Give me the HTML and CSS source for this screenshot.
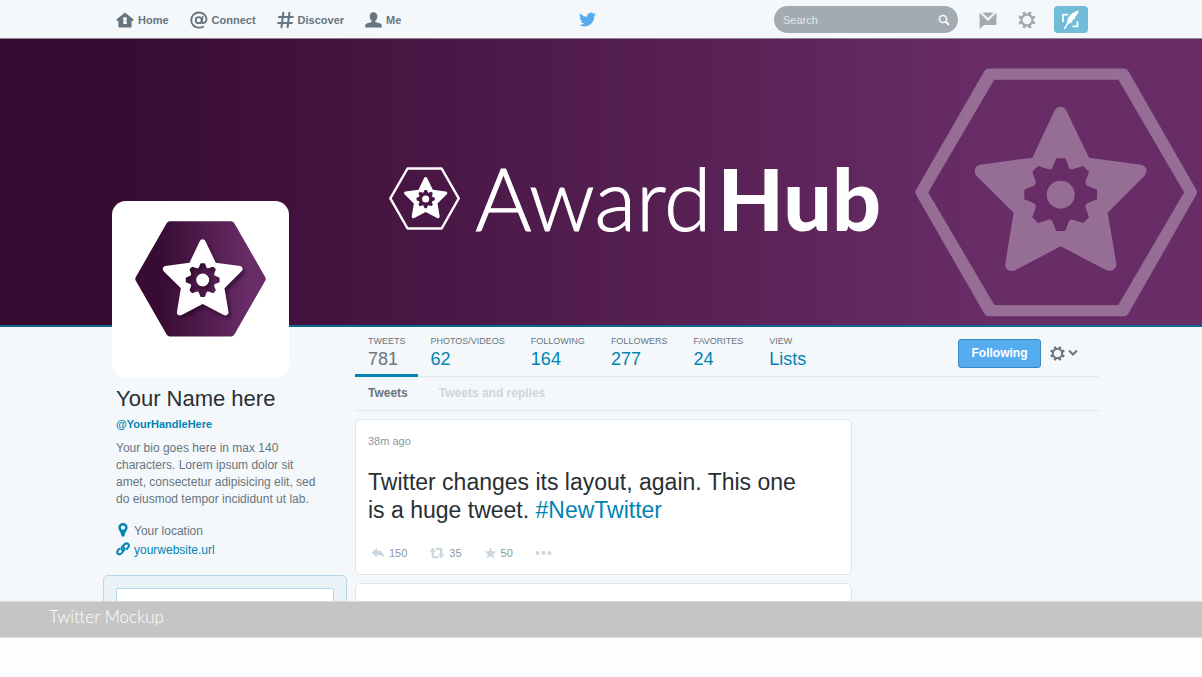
FILE: index.html
```html
<!DOCTYPE html>
<html lang="en">
<head>
  <meta charset="UTF-8">
  <meta name="viewport" content="width=device-width, initial-scale=1.0">
  <title>Twitter Mockup</title>
  <link rel="stylesheet" href="styles.css">
</head>
<body>

  <!-- shared shapes -->
  <svg class="defs" width="0" height="0" aria-hidden="true">
    <defs>
      <linearGradient id="hexFill" gradientUnits="userSpaceOnUse" x1="46" y1="425" x2="892" y2="425">
        <stop offset="0.18" stop-color="#370b32"/>
        <stop offset="0.85" stop-color="#682c66"/>
      </linearGradient>
      <path id="star" fill-rule="evenodd" d="M398 321L464 182Q469 168 482 168Q496 168 501 182L568 321L724 342Q741 346 741 360Q741 368 734 376L624 486L650 638Q651 652 640 658Q630 663 619 658L483 587L348 658Q336 664 325 658Q315 652 317 638L342 486L231 376Q225 369 225 360Q227 345 241 342Z
        M470 323L497 323L508 351Q511 358 519 356L551 346L568 363L558 392Q556 401 563 405L592 417L592 446L563 458Q556 462 558 471L568 500L551 517L519 507Q511 505 508 512L497 541L470 541L458 512Q455 505 447 507L415 517L398 500L408 471Q410 462 403 458L374 446L374 417L403 405Q410 401 408 392L398 363L415 346L447 356Q455 358 458 351Z
        M441 432a42 42 0 1 0 84 0a42 42 0 1 0 -84 0Z"/>
      <g id="gear" fill="none" stroke="currentColor">
        <circle cx="10" cy="10" r="5.5" stroke-width="2.3"/>
        <path stroke-width="2.8" d="M12.1 4.9L13.3 2M15.1 7.9L18 6.7M15.1 12.1L18 13.3M12.1 15.1L13.3 18M7.9 15.1L6.7 18M4.9 12.1L2 13.3M4.9 7.9L2 6.7M7.9 4.9L6.7 2"/>
      </g>
    </defs>
  </svg>

  <div class="screen">
    <header class="topbar">
      <div class="container topbar-inner">
        <nav class="nav">
          <a href="#">
            <svg width="18" height="18" viewBox="0 0 18 18"><path fill="currentColor" fill-rule="evenodd" d="M9 1.4L17.6 8.6L16.8 10H15.6V15.6Q15.6 16.6 14.6 16.6H3.4Q2.4 16.6 2.4 15.6V10H1.2L.4 8.6ZM9 6.1a1.9 1.9 0 0 0-1.2 3.4Q7.200 10 7.200 11V13H10.800V11Q10.800 10 10.200 9.500A1.900 1.900 0 0 0 9 6.100Z"/></svg>
            Home
          </a>
          <a href="#">
            <svg width="18" height="18" viewBox="0 0 18 18"><g fill="none" stroke="currentColor" stroke-width="1.8" stroke-linecap="round"><circle cx="8.7" cy="9.2" r="3"/><path d="M12.6 5.8L11.8 10.6Q11.7 12.4 13.3 12.2Q16.6 11.4 16.5 7.9A7.4 7.2 0 0 0 9 1.5A7.6 7.6 0 0 0 1.2 9.2A7.4 7.4 0 0 0 8.8 16.6Q11.2 16.7 13.2 15.7"/></g></svg>
            Connect
          </a>
          <a href="#">
            <svg width="17" height="18" viewBox="0 0 17 18"><path fill="none" stroke="currentColor" stroke-width="2.1" stroke-linecap="round" d="M6.3 1.8L4.5 16.2M12.4 1.8L10.6 16.2M2 6H15.8M1.2 12H15"/></svg>
            Discover
          </a>
          <a href="#">
            <svg width="17" height="18" viewBox="0 0 17 18"><path fill="currentColor" d="M8.5 1.2C11 1.2 12.4 2.9 12.3 5.3C12.2 7.7 11.3 9.2 10.2 10.1V11L14.8 12.2Q16.8 12.9 16.8 15V16.6H.2V15Q.2 12.9 2.2 12.2L6.8 11V10.1C5.7 9.2 4.8 7.7 4.7 5.3C4.6 2.9 6 1.2 8.5 1.2Z"/></svg>
            Me
          </a>
        </nav>

        <a class="bird" href="#" aria-label="Twitter">
          <svg width="17" height="17" viewBox="0 0 24 24"><path fill="currentColor" d="M23.953 4.57a10 10 0 01-2.825.775 4.958 4.958 0 002.163-2.723c-.951.555-2.005.959-3.127 1.184a4.92 4.92 0 00-8.384 4.482C7.69 8.095 4.067 6.13 1.64 3.162a4.822 4.822 0 00-.666 2.475c0 1.71.87 3.213 2.188 4.096a4.904 4.904 0 01-2.228-.616v.06a4.923 4.923 0 003.946 4.827 4.996 4.996 0 01-2.212.085 4.936 4.936 0 004.604 3.417 9.867 9.867 0 01-6.102 2.105c-.39 0-.779-.023-1.17-.067a13.995 13.995 0 007.557 2.209c9.053 0 13.998-7.496 13.998-13.985 0-.21 0-.42-.015-.63A9.935 9.935 0 0024 4.59z"/></svg>
        </a>

        <div class="tools">
          <form class="search">
            <input type="search" placeholder="Search" aria-label="Search">
            <button type="button" aria-label="Search">
              <svg width="12" height="12" viewBox="0 0 12 12"><g fill="none" stroke="currentColor" stroke-width="1.5"><circle cx="5" cy="5" r="3.6"/><path stroke-width="2" stroke-linecap="round" d="M7.9 7.9L10.4 10.4"/></g></svg>
            </button>
          </form>
          <button type="button" class="icon-btn" aria-label="Messages">
            <svg width="18" height="18" viewBox="0 0 18 18"><path fill="currentColor" d="M3.2 1.4H14.8L9 7ZM.6 1.4L9 10L17.4 1.4V14H5L.6 18Z"/><path fill="none" stroke="#f5f8fb" stroke-width="1.7" d="M1.400 1.200L9 8.600L16.600 1.200"/></svg>
          </button>
          <button type="button" class="icon-btn" aria-label="Settings">
            <svg width="20" height="20" viewBox="0 0 20 20"><use href="#gear"/></svg>
          </button>
          <button type="button" class="compose" aria-label="Compose new Tweet">
            <svg width="20" height="20" viewBox="0 0 20 20"><path fill="none" stroke="#fff" stroke-width="1.700" d="M7.200 4.600H2V12.300M11.500 16.400H16.500V11.300"/><path fill="#fff" d="M17.800 .3Q10.800 2.200 7.600 7.200Q5.900 10 6 12.800L2.600 18.800L4.100 19.300L7.200 14Q10.600 13.400 12.200 10.600L11 10.400Q13.600 9.400 14.800 7L13.600 6.900Q17 5 17.800 .3Z"/></svg>
          </button>
        </div>
      </div>
    </header>

    <section class="banner">
      <div class="brand">
        <svg width="71" height="63" viewBox="46 53 846 745" fill="#fff">
          <path fill="none" stroke="#fff" stroke-width="29" stroke-linejoin="round" d="M267 68H673L877 425L673 783H267L62 425Z"/>
          <use href="#star"/>
        </svg>
        <h1 class="wordmark"><span class="thin">Award</span><span class="heavy">Hub</span></h1>
      </div>
      <svg class="watermark" width="282" height="249" viewBox="46 53 846 745" aria-hidden="true">
        <path fill="none" stroke="#966d95" stroke-width="33" stroke-linejoin="round" d="M268 70H672L875 425L672 780H268L64 425Z"/>
        <path fill="none" stroke="#966d95" stroke-width="29" stroke-linejoin="round" d="M276 72H664L870 425L664 778H276L69 425Z"/>
        <use href="#star" fill="#966d95"/>
      </svg>
    </section>

    <div class="container profile">
      <aside class="sidebar">
        <div class="avatar">
          <svg width="131" height="116" viewBox="46 53 846 745">
            <path fill="url(#hexFill)" stroke="url(#hexFill)" stroke-width="50" stroke-linejoin="round" d="M272 78H666L865 425L666 772H272L73 425Z"/>
            <use class="avatar-star" href="#star" fill="#fff"/>
          </svg>
        </div>
        <div class="about">
          <h2>Your Name here</h2>
          <a class="handle" href="#">@YourHandleHere</a>
          <p class="bio">Your bio goes here in max 140 characters. Lorem ipsum dolor sit amet, consectetur adipisicing elit, sed do eiusmod tempor incididunt ut lab.</p>
          <p class="meta">
            <svg width="14" height="18" viewBox="0 0 14 18"><path fill="#0084b4" fill-rule="evenodd" d="M7 0A4.600 4.600 0 0 1 11.600 4.600C11.600 7.200 8.700 9.500 8.400 13.400H5.600C5.300 9.500 2.400 7.200 2.400 4.600A4.600 4.600 0 0 1 7 0ZM7 2.400A2.200 2.200 0 1 0 7 6.800A2.200 2.200 0 0 0 7 2.400Z"/></svg>
            Your location
          </p>
          <p class="meta">
            <svg width="14" height="18" viewBox="0 0 14 18"><g fill="none" stroke="#0084b4" stroke-width="2" stroke-linecap="round"><path d="M6.200 8.200Q4.800 6.600 6.200 5L8.600 2.200Q10.400 .6 12.200 2Q13.600 3.600 12.200 5.400L10.800 7"/><path d="M7.600 5.400Q9.200 7 7.800 8.600L5.400 11.400Q3.600 13.200 1.900 11.700Q.4 10.200 1.900 8.400L3.300 6.700"/></g></svg>
            <a href="#">yourwebsite.url</a>
          </p>
        </div>
        <div class="tweet-box">
          <input type="text" aria-label="Tweet to Your Name here">
        </div>
      </aside>

      <main class="main">
        <div class="stats-row">
          <ul class="stats">
            <li class="active"><a href="#"><span>Tweets</span>781</a></li>
            <li><a href="#"><span>Photos/Videos</span>62</a></li>
            <li><a href="#"><span>Following</span>164</a></li>
            <li><a href="#"><span>Followers</span>277</a></li>
            <li><a href="#"><span>Favorites</span>24</a></li>
            <li><a href="#"><span>View</span>Lists</a></li>
          </ul>
          <div class="follow">
            <button type="button" class="btn-follow">Following</button>
            <button type="button" class="btn-more" aria-label="More options">
              <svg width="17" height="17" viewBox="0 0 20 20"><use href="#gear"/></svg>
              <svg width="10" height="8" viewBox="0 0 10 8"><path fill="none" stroke="currentColor" stroke-width="2" d="M1 1.500L5 5.500L9 1.500"/></svg>
            </button>
          </div>
        </div>

        <nav class="tabs">
          <a class="current" href="#">Tweets</a>
          <a href="#">Tweets and replies</a>
        </nav>

        <article class="tweet">
          <time>38m ago</time>
          <p>Twitter changes its layout, again. This one is a huge tweet. <a href="#">#NewTwitter</a></p>
          <div class="actions">
            <button type="button" aria-label="Reply, 150">
              <svg width="14" height="12" viewBox="0 0 14 12"><path fill="currentColor" d="M6 .8V3.600Q12.800 3.600 13 11Q11.200 7.800 6 7.800V10.600L.6 5.700Z"/></svg>
              <span>150</span>
            </button>
            <button type="button" aria-label="Retweet, 35">
              <svg width="16" height="12" viewBox="0 0 16 12"><path fill="currentColor" d="M3.700 .8L7 4.600H4.900V9H8.500L10.500 11.200H4Q2.600 11.200 2.600 9.800V4.600H.4ZM5.700 .8H12Q13.400 .8 13.400 2.200V7.400H15.600L12.300 11.200L9 7.400H11.100V3H7.700Z"/></svg>
              <span>35</span>
            </button>
            <button type="button" aria-label="Favorite, 50">
              <svg width="13" height="12" viewBox="0 0 13 12"><path fill="currentColor" d="M6.500 .2L8.100 4.300L12.600 4.500L9.100 7.200L10.400 11.600L6.500 9.100L2.600 11.600L3.900 7.200L.4 4.500L4.900 4.300Z"/></svg>
              <span>50</span>
            </button>
            <button type="button" aria-label="More">
              <svg width="17" height="12" viewBox="0 0 17 12"><g fill="currentColor"><circle cx="2.500" cy="6" r="2"/><circle cx="8.500" cy="6" r="2"/><circle cx="14.500" cy="6" r="2"/></g></svg>
            </button>
          </div>
        </article>

        <article class="tweet">
          <time></time>
        </article>
      </main>
    </div>
  </div>

  <footer class="caption">Twitter Mockup</footer>

</body>
</html>
```

FILE: styles.css
```css
* { box-sizing: border-box; }

body {
  margin: 0;
  height: 100vh;
  display: flex;
  flex-direction: column;
  font-family: "Liberation Sans", Arial, sans-serif;
  font-size: 12px;
  color: #66757f;
  background: #fcfdff;
}
h1, h2, p, ul { margin: 0; padding: 0; }
a { color: #0084b4; text-decoration: none; }
svg { display: block; flex: none; }
button {
  font-family: inherit;
  padding: 0;
  border: none;
  background: none;
  cursor: pointer;
}
.defs { position: absolute; }

.screen {
  flex: 1;
  min-height: 0;
  overflow: hidden;
  background: #f5f8fa;
}
.container {
  max-width: 996px;
  margin: 0 auto;
}

/* top bar */
.topbar {
  background: #f5f8fb;
  border-bottom: 1px solid #8d8590;
}
.topbar-inner {
  display: flex;
  align-items: center;
  justify-content: space-between;
  height: 38px;
  padding: 1px 11px 0 13px;
}
.nav {
  display: flex;
  gap: 21px;
}
.nav a {
  display: flex;
  align-items: center;
  gap: 4px;
  font-size: 11px;
  font-weight: bold;
  color: #66757f;
}
.bird { color: #55acee; }
.tools {
  display: flex;
  align-items: center;
  gap: 20px;
}
.search {
  display: flex;
  align-items: center;
  width: 184px;
  height: 27px;
  margin-right: 1px;
  padding: 0 8px;
  border-radius: 14px;
  background: #a3abb2;
}
.search input {
  flex: 1;
  min-width: 0;
  padding: 0 1px;
  border: none;
  outline: none;
  background: none;
  font-family: inherit;
  font-size: 11px;
  color: #fff;
}
.search input::placeholder { color: #e1e5e8; opacity: 1; }
.search button { color: #fff; }
.icon-btn { color: #a3abb2; }
.compose {
  display: flex;
  align-items: center;
  justify-content: center;
  width: 34px;
  height: 27px;
  margin-left: -3px;
  border-radius: 4px;
  background: #71bcd9;
}

/* banner */
.banner {
  display: flex;
  align-items: center;
  justify-content: flex-end;
  gap: 34px;
  height: 288px;
  padding-right: 5px;
  border-bottom: 2px solid #0a6590;
  background: linear-gradient(90deg, #370b32 10%, #682c66 82%);
}
.brand {
  display: flex;
  align-items: center;
  gap: 15px;
  padding-top: 32px;
}
.wordmark {
  display: flex;
  gap: 6px;
  font-family: Lato, sans-serif;
  font-size: 86px;
  line-height: 64px;
  color: #fff;
}
.thin {
  font-weight: 300;
  -webkit-text-stroke: 1px #fff;
}
.heavy { font-weight: 900; }
.watermark { margin-top: 20px; }

/* profile */
.profile {
  display: flex;
  align-items: flex-start;
  gap: 8px;
}
.sidebar {
  flex: none;
  width: 244px;
  margin-top: -126px;
}
.avatar {
  width: 177px;
  height: 177px;
  margin-left: 9px;
  padding: 20px 23px;
  border-radius: 14px;
  background: #fff;
}
.avatar-star { filter: drop-shadow(14px 20px 14px rgba(30, 0, 30, 0.6)); }
.about { padding: 8px 22px 15px 13px; }
.about h2 {
  font-size: 22px;
  font-weight: normal;
  line-height: 26px;
  color: #292f33;
}
.handle {
  display: block;
  margin: 4px 0 7px;
  font-size: 11px;
  font-weight: bold;
  line-height: 17px;
}
.bio {
  margin-bottom: 14px;
  line-height: 17px;
}
.meta {
  display: flex;
  align-items: center;
  gap: 4px;
  line-height: 19px;
}
.tweet-box {
  padding: 12px;
  border: 1px solid #b2dbea;
  border-radius: 5px;
  background: #e9f2f7;
}
.tweet-box input {
  width: 100%;
  height: 32px;
  border: 1px solid #b2dbea;
  border-radius: 2px;
  background: #fff;
}

.main {
  flex: 1;
  min-width: 0;
}
.stats-row {
  display: flex;
  justify-content: space-between;
  border-bottom: 1px solid #dfe8ed;
}
.stats {
  display: flex;
  margin-bottom: -1px;
  list-style: none;
}
.stats a {
  display: block;
  padding: 7px 13px 4px;
  border-bottom: 3px solid transparent;
  font-size: 18px;
  line-height: 22px;
}
.stats span {
  display: block;
  font-size: 9px;
  line-height: 14px;
  text-transform: uppercase;
  color: #66757f;
}
.stats .active a {
  padding-right: 12px;
  color: #66757f;
  border-color: #0084b4;
}
.follow {
  display: flex;
  align-items: center;
  gap: 8px;
  padding: 3px 21px 0 0;
}
.btn-follow {
  width: 83px;
  height: 29px;
  border: 1px solid #3b88c3;
  border-radius: 3px;
  background: #55acee;
  font-size: 12px;
  font-weight: bold;
  color: #fff;
}
.btn-more {
  display: flex;
  align-items: center;
  gap: 2px;
  color: #66757f;
}
.tabs {
  display: flex;
  gap: 31px;
  padding: 0 13px;
  border-bottom: 1px solid #dfe8ed;
  font-weight: bold;
  line-height: 33px;
}
.tabs a { color: #ccd6dd; }
.tabs .current { color: #66757f; }

.tweet {
  max-width: 497px;
  min-height: 60px;
  margin-top: 8px;
  padding: 13px 12px;
  border: 1px solid #dde6ec;
  border-radius: 5px;
  background: #fff;
}
.tweet time {
  display: block;
  font-size: 11px;
  line-height: 16px;
  color: #8899a6;
}
.tweet p {
  margin: 19px 0 21px;
  padding-right: 32px;
  font-size: 23px;
  line-height: 28px;
  color: #292f33;
}
.actions {
  display: flex;
  gap: 22px;
  padding-left: 3px;
}
.actions button {
  display: flex;
  align-items: center;
  gap: 4px;
  height: 16px;
  font-size: 11px;
  color: #ccd6dd;
}
.actions span { color: #8899a6; }

/* caption strip */
.caption {
  height: 37px;
  margin-bottom: 39px;
  padding-left: 49px;
  border: solid #d8d8d8;
  border-width: 1px 0;
  background: #c5c5c5;
  font-family: Lato, sans-serif;
  font-size: 17px;
  font-weight: 300;
  line-height: 30px;
  color: #fff;
}
```
